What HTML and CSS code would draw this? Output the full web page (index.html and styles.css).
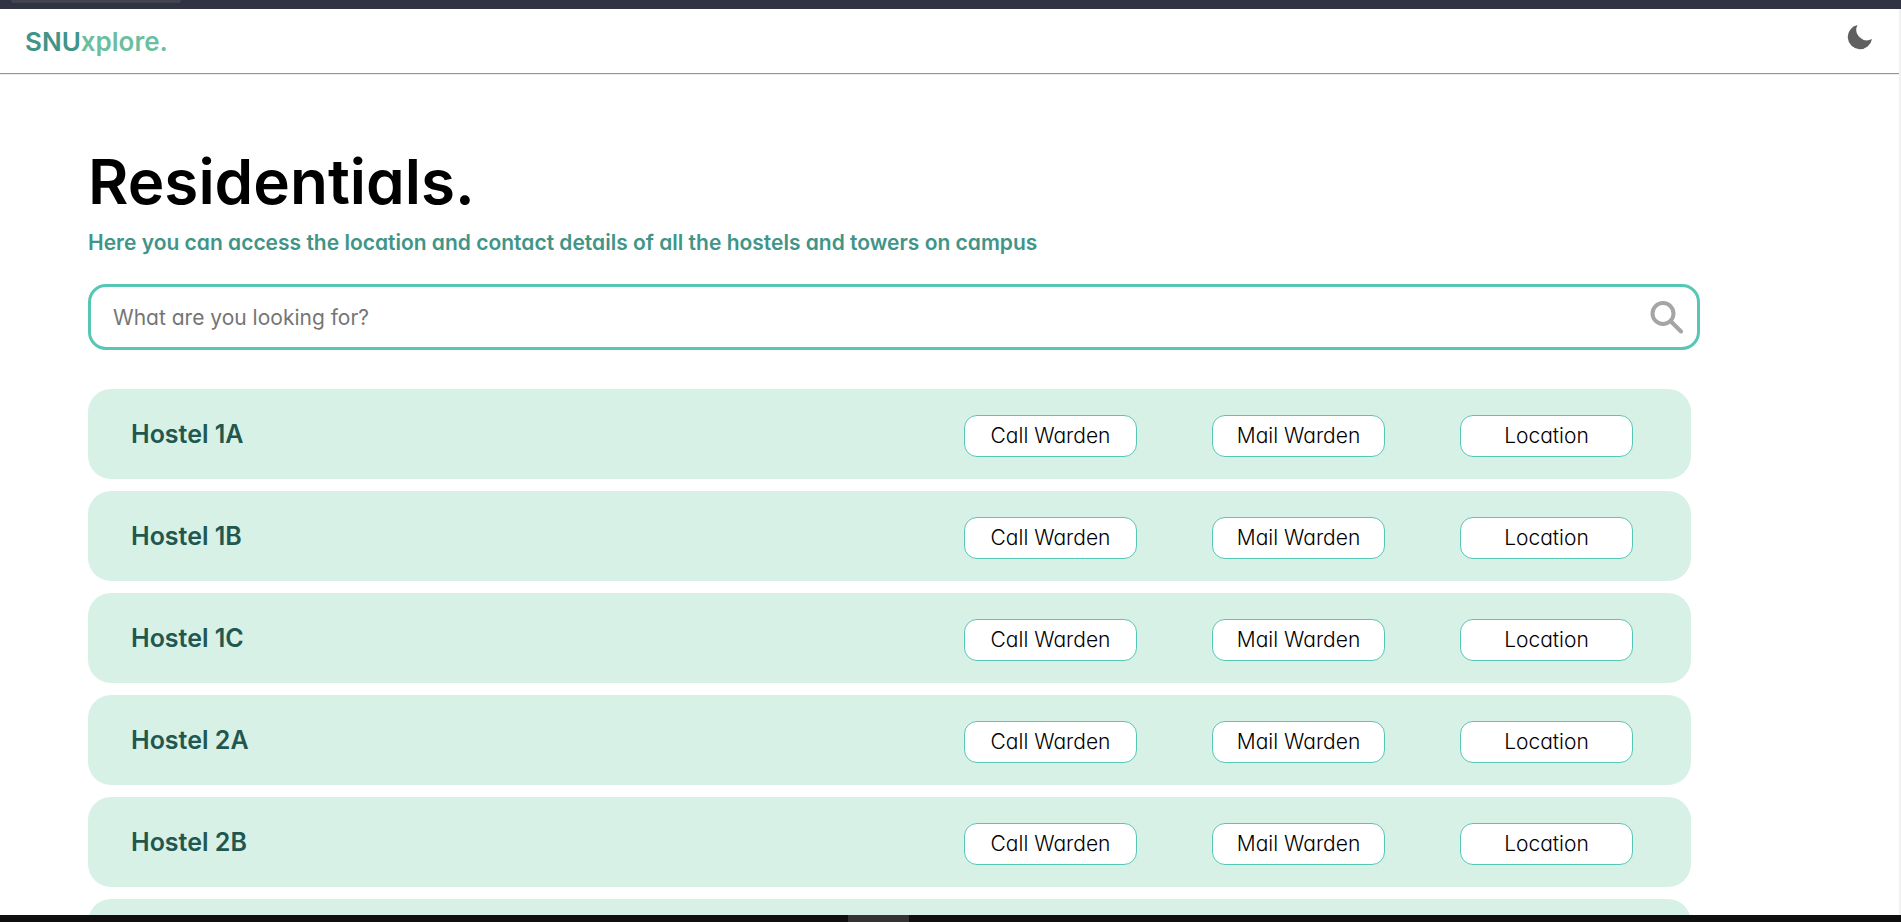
FILE: index.html
```html
<!DOCTYPE html>
<html lang="en">
<head>
<meta charset="utf-8">
<title>SNUxplore - Residentials</title>
<link rel="stylesheet" href="styles.css">
</head>
<body>
<div class="window-top"><div class="window-tab"></div></div>
<div class="page">
  <header class="header">
    <a class="logo" href="#"><span class="logo-strong">SNU</span>xplore.</a>
    <button class="theme" type="button" aria-label="Dark mode">
      <svg width="26" height="26" viewBox="0 0 26 26"><path d="M10.500 1A12.200 12.200 0 1 0 25 15A10.600 10.600 0 0 1 10.500 1Z" fill="#606060"/></svg>
    </button>
  </header>
  <main class="main">
    <h1 class="title">Residentials.</h1>
    <p class="subtitle">Here you can access the location and contact details of all the hostels and towers on campus</p>
    <form class="search">
      <input class="search-input" type="text" placeholder="What are you looking for?" aria-label="Search">
      <button class="search-button" type="button" aria-label="Search">
        <svg width="34" height="34" viewBox="0 0 34 34" fill="none" stroke="#a5a5a3" stroke-width="4"><circle cx="13" cy="13.500" r="10.500"/><path d="M20.500 21L31 31.500" stroke-linecap="round"/></svg>
      </button>
    </form>
    <ul class="list">
      <li class="card"><h2 class="name">Hostel 1A</h2><a class="action" href="#">Call Warden</a><a class="action" href="#">Mail Warden</a><a class="action" href="#">Location</a></li>
      <li class="card"><h2 class="name">Hostel 1B</h2><a class="action" href="#">Call Warden</a><a class="action" href="#">Mail Warden</a><a class="action" href="#">Location</a></li>
      <li class="card"><h2 class="name">Hostel 1C</h2><a class="action" href="#">Call Warden</a><a class="action" href="#">Mail Warden</a><a class="action" href="#">Location</a></li>
      <li class="card"><h2 class="name">Hostel 2A</h2><a class="action" href="#">Call Warden</a><a class="action" href="#">Mail Warden</a><a class="action" href="#">Location</a></li>
      <li class="card"><h2 class="name">Hostel 2B</h2><a class="action" href="#">Call Warden</a><a class="action" href="#">Mail Warden</a><a class="action" href="#">Location</a></li>
      <li class="card"></li>
    </ul>
  </main>
</div>
<div class="window-bottom"><div class="window-task"></div></div>
</body>
</html>
```
FILE: styles.css
```css
* { box-sizing: border-box; }
body {
  margin: 0;
  height: 100vh;
  display: flex;
  flex-direction: column;
  overflow: hidden;
  background: #fff;
  color: #000;
  font-family: Inter, "Open Sans", sans-serif;
  font-feature-settings: "cv11";
}
h1, h2, p, ul { margin: 0; padding: 0; }
a { color: inherit; text-decoration: none; }
button { padding: 0; border: 0; background: none; }
svg { display: block; }

.window-top { flex: none; height: 9px; padding-left: 11px; background: #303342; }
.window-tab { width: 170px; height: 3px; border-radius: 0 0 4px 4px; background: #42444f; }
.window-bottom { flex: none; height: 7px; padding-left: 848px; background: #0f0f0f; }
.window-task { width: 61px; height: 7px; background: #333; }

.page { flex: 1; min-height: 0; overflow: hidden; border-right: 2px solid #f1f1f1; }
.header {
  display: flex;
  justify-content: space-between;
  height: 65px;
  padding: 15px 26px 0 25px;
  border-bottom: 1px solid #959595;
  box-shadow: 0 1px 0 #eee;
}
.logo { font-size: 26px; line-height: 36px; font-weight: 600; color: #6bbf9f; }
.logo-strong { color: #419488; }
.theme { align-self: flex-start; }

.main { padding: 72px 199px 0 88px; }
.title { font-size: 62px; line-height: 72px; font-weight: 600; }
.subtitle { margin-top: 10px; font-size: 21px; line-height: 30px; font-weight: 600; color: #419488; }
.search {
  display: flex;
  align-items: center;
  height: 66px;
  margin-top: 26px;
  padding-right: 13px;
  border: 3px solid #56c7b5;
  border-radius: 18px;
}
.search-input {
  flex: 1;
  height: 60px;
  padding: 0 22px;
  border: 0;
  outline: 0;
  background: none;
  font: inherit;
  font-size: 21px;
}
.search-input::placeholder { color: #757575; }

.list { display: grid; gap: 12px; margin: 39px 9px 0 0; list-style: none; }
.card {
  display: flex;
  align-items: center;
  gap: 75px;
  height: 90px;
  padding: 4px 58px 0 43px;
  border-radius: 23px;
  background: #d8f1e6;
}
.name { flex: 1; padding-bottom: 4px; font-size: 25px; line-height: 32px; font-weight: 600; color: #22574f; }
.action {
  width: 173px;
  border: 1px solid #56c7b5;
  border-radius: 13px;
  background: #fff;
  font-size: 21px;
  line-height: 40px;
  font-weight: 300;
  text-align: center;
}
```
